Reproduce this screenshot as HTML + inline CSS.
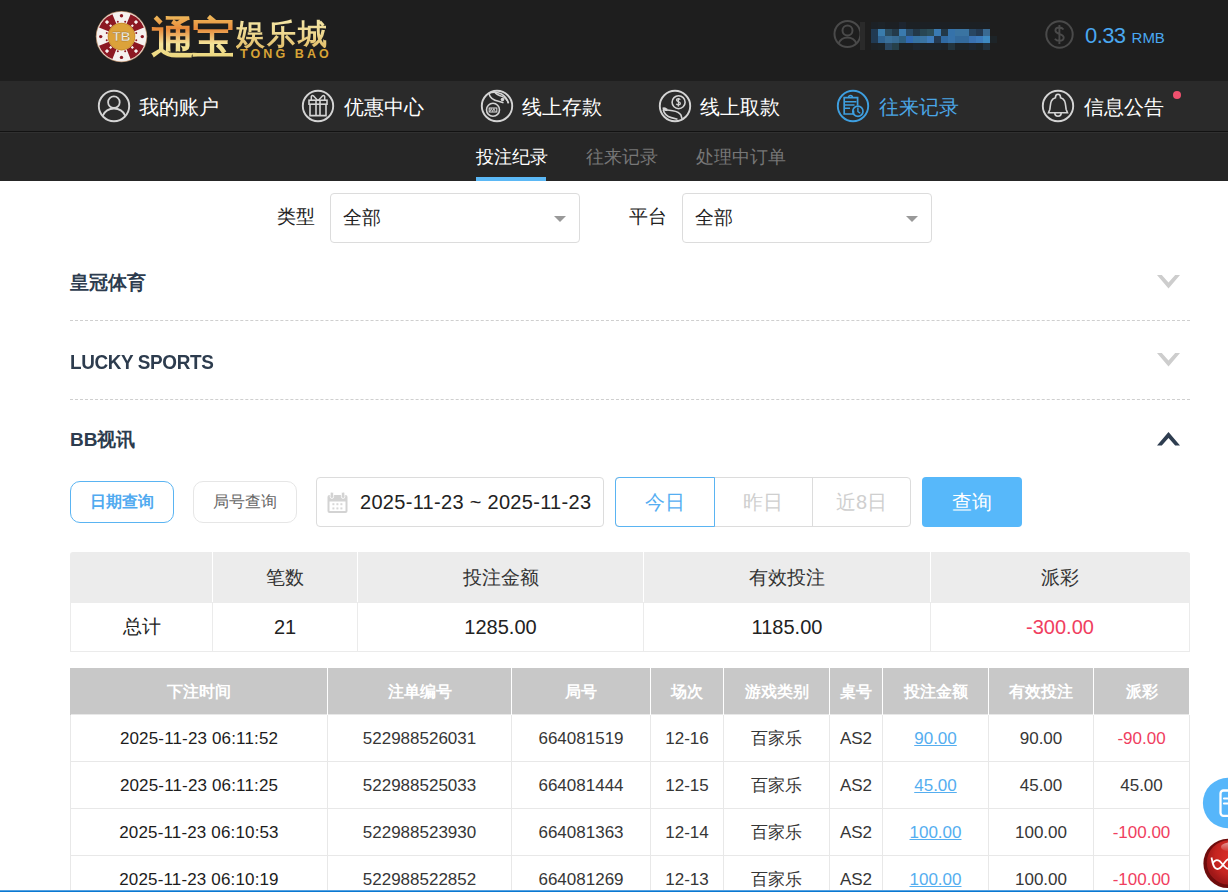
<!DOCTYPE html>
<html><head><meta charset="utf-8">
<style>
*{margin:0;padding:0;box-sizing:border-box}
html,body{width:1228px;height:892px;overflow:hidden;background:#fff;font-family:"Liberation Sans",sans-serif;color:#333}
.abs{position:absolute}
#hdr{position:absolute;left:0;top:0;width:1228px;height:81px;background:#1e1e1e}
#nav{position:absolute;left:0;top:81px;width:1228px;height:50px;background:#2a2a2a}
#navline{position:absolute;left:0;top:131px;width:1228px;height:1px;background:#121212}
#navline2{position:absolute;left:0;top:132px;width:1228px;height:1px;background:#303030}
#sub{position:absolute;left:0;top:133px;width:1228px;height:48px;background:#262626}
.ni{position:absolute;top:81px;height:50px;display:flex;align-items:center;color:#fff;font-size:20px;white-space:nowrap}
.ni svg{display:block}
.ni span{position:absolute;top:14px;line-height:24px}
.st{position:absolute;top:145px;font-size:18px;line-height:24px;color:#777;white-space:nowrap}
.lbl{position:absolute;font-size:19px;line-height:24px;color:#222}
.sel{position:absolute;top:193px;width:250px;height:50px;border:1px solid #dcdcdc;border-radius:4px;background:#fff}
.sel span{position:absolute;left:12px;top:12px;font-size:19px;line-height:24px;color:#222}
.sel i{position:absolute;right:13px;top:22px;width:0;height:0;border-left:6px solid transparent;border-right:6px solid transparent;border-top:6px solid #999}
.sec{position:absolute;left:70px;font-size:19px;font-weight:bold;color:#2d3c4e;line-height:24px;white-space:nowrap}
.dash{position:absolute;left:70px;width:1120px;height:0;border-top:1px dashed #cfcfcf}

table{border-collapse:collapse;table-layout:fixed}
.sum td{border:1px solid #ebebeb;text-align:center;font-size:19px;color:#222;padding:0}
.sum .h td{background:#ececec;height:50px;color:#333;border-color:#fff;border-top-color:#ececec;border-bottom-color:#ececec}
.sum .h td:first-child{border-left-color:#ececec}
.sum .h td:last-child{border-right-color:#ececec}
.sum .r td{height:49px;background:#fff}
.sum .r td.n{font-size:20px}
.det td{border:1px solid #e8e8e8;text-align:center;font-size:17px;color:#363636;height:47px;padding:2px 0 0;white-space:nowrap}
.det .h td{background:#c8c8c8;color:#fff;font-weight:bold;font-size:16px;border-color:#fff;border-top:0;border-bottom:0;height:46px;padding-top:3px}
.det u{color:#55aef0}
.det .h td:first-child{border-left-color:#c8c8c8}
.det .red{color:#f03e60}
.det tr:not(.h) td:first-child{color:#1c1c1c;letter-spacing:0.15px}

.gold{background:linear-gradient(180deg,#f0c060 0%,#e88a3a 30%,#f4e49a 60%,#e8d070 100%);-webkit-background-clip:text;background-clip:text;color:transparent}
.gold2{color:#d8a436}
.gold3{background:linear-gradient(180deg,#f6e8a8 0%,#eed890 50%,#e0b860 100%);-webkit-background-clip:text;background-clip:text;color:transparent}
</style></head>
<body>
<div id="hdr"></div>
<div id="nav"></div>
<div id="navline"></div>
<div id="navline2"></div>
<div id="sub"></div>


<!-- logo -->
<svg class="abs" style="left:94px;top:9px" width="56" height="56" viewBox="0 0 56 56">
 <circle cx="27.5" cy="27.6" r="25.7" fill="#b89070"/>
 <circle cx="27.5" cy="27.6" r="24.9" fill="#f5f1ef"/>
 <path d="M49.94 36.67A24.2 24.2 0 0 1 36.57 50.04L32.56 40.12A13.5 13.5 0 0 0 40.02 32.66ZM18.43 50.04A24.2 24.2 0 0 1 5.06 36.67L14.98 32.66A13.5 13.5 0 0 0 22.44 40.12ZM5.06 18.53A24.2 24.2 0 0 1 18.43 5.16L22.44 15.08A13.5 13.5 0 0 0 14.98 22.54ZM36.57 5.16A24.2 24.2 0 0 1 49.94 18.53L40.02 22.54A13.5 13.5 0 0 0 32.56 15.08Z" fill="#8c1822"/>
 <g fill="#f5f1ef"><rect x="40.50" y="40.60" width="3.00" height="3.00" transform="rotate(45 42.00 42.10)"/><rect x="37.22" y="37.32" width="2.20" height="2.20" transform="rotate(45 38.32 38.42)"/><rect x="11.50" y="40.60" width="3.00" height="3.00" transform="rotate(45 13.00 42.10)"/><rect x="15.58" y="37.32" width="2.20" height="2.20" transform="rotate(45 16.68 38.42)"/><rect x="11.50" y="11.60" width="3.00" height="3.00" transform="rotate(45 13.00 13.10)"/><rect x="15.58" y="15.68" width="2.20" height="2.20" transform="rotate(45 16.68 16.78)"/><rect x="40.50" y="11.60" width="3.00" height="3.00" transform="rotate(45 42.00 13.10)"/><rect x="37.22" y="15.68" width="2.20" height="2.20" transform="rotate(45 38.32 16.78)"/></g>
 <g fill="#8c1822"><circle cx="48.30" cy="27.60" r="1.7"/><circle cx="42.25" cy="23.92" r="1.0"/><circle cx="42.25" cy="31.28" r="1.0"/><circle cx="27.50" cy="48.40" r="1.7"/><circle cx="31.18" cy="42.35" r="1.0"/><circle cx="23.82" cy="42.35" r="1.0"/><circle cx="6.70" cy="27.60" r="1.7"/><circle cx="12.75" cy="31.28" r="1.0"/><circle cx="12.75" cy="23.92" r="1.0"/><circle cx="27.50" cy="6.80" r="1.7"/><circle cx="23.82" cy="12.85" r="1.0"/><circle cx="31.18" cy="12.85" r="1.0"/></g>
 <circle cx="27.5" cy="27.6" r="13.8" fill="#c98e2c"/>
 <circle cx="27.5" cy="27.6" r="12.9" fill="#dca23a"/>
 <text x="27.5" y="32.3" text-anchor="middle" font-family="Liberation Sans" font-weight="bold" font-size="13.5" fill="#f0efe8" stroke="#a07020" stroke-width="0.4">TB</text>
</svg>
<div class="abs gold" style="left:151px;top:14px;font-size:44px;line-height:50px;font-family:'Liberation Serif',serif;font-weight:bold;letter-spacing:-3px;white-space:nowrap">通宝</div>
<div class="abs gold3" style="left:236px;top:16.5px;font-size:29px;line-height:34px;font-family:'Liberation Serif',serif;font-weight:bold;letter-spacing:1.8px;white-space:nowrap">娱乐城</div>
<div class="abs gold2" style="left:240px;top:47.5px;font-size:12.5px;line-height:13px;font-family:'Liberation Sans',sans-serif;font-weight:bold;letter-spacing:3.1px;white-space:nowrap">TONG BAO</div>

<!-- user info -->
<svg class="abs" style="left:833px;top:19px" width="32" height="31" viewBox="0 0 32 31">
 <circle cx="14.5" cy="15" r="13" fill="none" stroke="#4a4a4a" stroke-width="2"/>
 <circle cx="14.5" cy="11.5" r="5" fill="none" stroke="#4a4a4a" stroke-width="2"/>
 <path d="M5.5 24.5c2-4.5 5-6 9-6s7 1.5 9 6" fill="none" stroke="#4a4a4a" stroke-width="2"/>
 <rect x="27" y="3" width="5" height="28" fill="#2a2a2a"/>
</svg>
<svg class="abs" style="left:871px;top:22px;filter:blur(0.5px)" width="126" height="28" viewBox="0 0 126 28" shape-rendering="crispEdges"><rect x="0" y="0" width="7" height="7" fill="#1c2126"/><rect x="7" y="0" width="7" height="7" fill="#1d2328"/><rect x="14" y="0" width="7" height="7" fill="#1c2024"/><rect x="21" y="0" width="7" height="7" fill="#1c2024"/><rect x="28" y="0" width="7" height="7" fill="#1d2530"/><rect x="35" y="0" width="7" height="7" fill="#1c2024"/><rect x="42" y="0" width="7" height="7" fill="#1c2024"/><rect x="49" y="0" width="7" height="7" fill="#1c2024"/><rect x="56" y="0" width="7" height="7" fill="#1c2024"/><rect x="63" y="0" width="7" height="7" fill="#1c2024"/><rect x="70" y="0" width="7" height="7" fill="#1c2024"/><rect x="77" y="0" width="7" height="7" fill="#1c2024"/><rect x="84" y="0" width="7" height="7" fill="#1c2024"/><rect x="91" y="0" width="7" height="7" fill="#1c2024"/><rect x="98" y="0" width="7" height="7" fill="#1c2024"/><rect x="105" y="0" width="7" height="7" fill="#1c2024"/><rect x="112" y="0" width="7" height="7" fill="#1c2024"/><rect x="0" y="7" width="7" height="7" fill="#213a52"/><rect x="7" y="7" width="7" height="7" fill="#3a7cac"/><rect x="14" y="7" width="7" height="7" fill="#2b4c60"/><rect x="21" y="7" width="7" height="7" fill="#243a4a"/><rect x="28" y="7" width="7" height="7" fill="#3a7aae"/><rect x="35" y="7" width="7" height="7" fill="#2a4c68"/><rect x="42" y="7" width="7" height="7" fill="#233848"/><rect x="49" y="7" width="7" height="7" fill="#284652"/><rect x="56" y="7" width="7" height="7" fill="#2c4e5a"/><rect x="63" y="7" width="7" height="7" fill="#3a7ab2"/><rect x="70" y="7" width="7" height="7" fill="#223848"/><rect x="77" y="7" width="7" height="7" fill="#3572aa"/><rect x="84" y="7" width="7" height="7" fill="#3a74a2"/><rect x="91" y="7" width="7" height="7" fill="#3a74a2"/><rect x="98" y="7" width="7" height="7" fill="#284662"/><rect x="105" y="7" width="7" height="7" fill="#243a52"/><rect x="112" y="7" width="7" height="7" fill="#3a6a92"/><rect x="0" y="14" width="7" height="7" fill="#213a52"/><rect x="7" y="14" width="7" height="7" fill="#306492"/><rect x="14" y="14" width="7" height="7" fill="#3a709a"/><rect x="21" y="14" width="7" height="7" fill="#376a92"/><rect x="28" y="14" width="7" height="7" fill="#2e6082"/><rect x="35" y="14" width="7" height="7" fill="#306ab2"/><rect x="42" y="14" width="7" height="7" fill="#3672a2"/><rect x="49" y="14" width="7" height="7" fill="#3a74a2"/><rect x="56" y="14" width="7" height="7" fill="#3e7cba"/><rect x="63" y="14" width="7" height="7" fill="#243a52"/><rect x="70" y="14" width="7" height="7" fill="#306aa2"/><rect x="77" y="14" width="7" height="7" fill="#3672aa"/><rect x="84" y="14" width="7" height="7" fill="#336a9c"/><rect x="91" y="14" width="7" height="7" fill="#336a9c"/><rect x="98" y="14" width="7" height="7" fill="#3a72b2"/><rect x="105" y="14" width="7" height="7" fill="#3c7aba"/><rect x="112" y="14" width="7" height="7" fill="#3e8ac2"/><rect x="119" y="14" width="7" height="7" fill="#1d2428"/><rect x="0" y="21" width="7" height="7" fill="#1d2226"/><rect x="7" y="21" width="7" height="7" fill="#1d2428"/><rect x="14" y="21" width="7" height="7" fill="#2a4862"/><rect x="21" y="21" width="7" height="7" fill="#26404a"/><rect x="28" y="21" width="7" height="7" fill="#1d2226"/><rect x="35" y="21" width="7" height="7" fill="#1d2226"/><rect x="42" y="21" width="7" height="7" fill="#1d2630"/><rect x="49" y="21" width="7" height="7" fill="#1d2428"/><rect x="56" y="21" width="7" height="7" fill="#1d242a"/><rect x="63" y="21" width="7" height="7" fill="#1d242a"/><rect x="70" y="21" width="7" height="7" fill="#1d2226"/><rect x="77" y="21" width="7" height="7" fill="#22343e"/><rect x="84" y="21" width="7" height="7" fill="#1d2428"/><rect x="91" y="21" width="7" height="7" fill="#1d2428"/><rect x="98" y="21" width="7" height="7" fill="#1d2630"/><rect x="105" y="21" width="7" height="7" fill="#1d2428"/><rect x="112" y="21" width="7" height="7" fill="#22323e"/></svg>
<svg class="abs" style="left:1044px;top:19px" width="31" height="31" viewBox="0 0 31 31">
 <circle cx="15.5" cy="15.5" r="13.2" fill="none" stroke="#4a4a4a" stroke-width="2"/>
 <path d="M19.5 10.5c-1-1.3-2.4-2-4.2-2-2.3 0-3.9 1.3-3.9 3.1 0 4.2 8.3 2.6 8.3 7 0 2-1.8 3.3-4.3 3.3-1.9 0-3.5-.8-4.5-2.2M15.4 6v19" fill="none" stroke="#4a4a4a" stroke-width="1.9"/>
</svg>
<div class="abs" style="left:1085px;top:22.5px;font-size:22px;line-height:26px;color:#4aa8f0;white-space:nowrap"><span style="letter-spacing:-0.6px">0.33</span> <span style="font-size:15px">RMB</span></div>

<!-- nav items -->
<div class="ni" style="left:97px">
 <svg width="34" height="34" viewBox="0 0 34 34" fill="none" stroke="#d4d4d4"><circle cx="17" cy="17" r="15.2" stroke-width="1.9"/><circle cx="16.9" cy="13.2" r="5.8" stroke-width="1.8"/><path d="M5.6 26.8C8 21.8 12 19.5 17 19.5S26 21.8 28.4 26.8" stroke-width="1.8"/></svg>
 <span style="left:42px">我的账户</span></div>
<div class="ni" style="left:301px">
 <svg width="34" height="34" viewBox="0 0 34 34" fill="none" stroke="#d4d4d4"><circle cx="17" cy="17" r="15.2" stroke-width="1.9"/><rect x="8" y="11.2" width="18" height="4" stroke-width="1.6"/><path d="M9 15.2V26.6H25V15.2M15 11.2V26.6M19 11.2V26.6" stroke-width="1.6"/><path d="M16.5 11.2L12.8 7.2Q11 5.8 10.3 7.6L10.3 11.2M17.5 11.2L21.2 7.2Q23 5.8 23.7 7.6L23.7 11.2" stroke-width="1.5"/></svg>
 <span style="left:43px">优惠中心</span></div>
<div class="ni" style="left:480px">
 <svg width="34" height="34" viewBox="0 0 34 34" fill="none" stroke="#d4d4d4"><circle cx="17" cy="17" r="15.2" stroke-width="1.9"/><path d="M8.6 4.6C12 2.8 17.5 3 21.5 5C25 7 27.3 10.5 28.6 14.2" stroke-width="1.5"/><path d="M14.5 3C16 5 19 6.5 22 7.3C25 8.5 27.3 11 28.3 14.3" stroke-width="1.3"/><path d="M9 4.8C10 8.8 13.5 11.5 18.5 12.2L23.5 13.8" stroke-width="1.5"/><circle cx="22.5" cy="10.5" r="1.8" fill="#d4d4d4" stroke="none"/><circle cx="13" cy="20.8" r="6.5" stroke-width="1.6"/><rect x="9.2" y="19" width="7.6" height="4" stroke-width="1.1"/><path d="M10 22.5l1.3-3 1.3 3 1.3-3 1.3 3" stroke-width="0.9"/></svg>
 <span style="left:42px">线上存款</span></div>
<div class="ni" style="left:658px">
 <svg width="34" height="34" viewBox="0 0 34 34" fill="none" stroke="#d4d4d4"><circle cx="17" cy="17" r="15.2" stroke-width="1.9"/><circle cx="20.6" cy="13.2" r="6.5" stroke-width="1.6"/><path d="M22.3 10.6c-.5-.6-1.2-.9-2-.9-1.1 0-1.8.6-1.8 1.4 0 1.8 3.8 1.2 3.8 3.2 0 .9-.8 1.6-2 1.6-.9 0-1.6-.4-2.1-1M20.4 9v8.4" stroke-width="1.3"/><path d="M9.5 21L14.6 21.7C18 22.2 21.5 23.2 23 26.2L24 29.8" stroke-width="1.6"/><path d="M5.2 20.5C6 24.5 9 27.5 13.3 28.6L19.5 30.2" stroke-width="1.6"/><path d="M4.3 18.8Q6 17.2 9 19.6L10.4 21.4Q7.5 22.6 5.2 21.2Z" fill="#d4d4d4" stroke="none"/></svg>
 <span style="left:42px">线上取款</span></div>
<div class="ni" style="left:836px;color:#4aa6e6">
 <svg width="34" height="34" viewBox="0 0 34 34" fill="none" stroke="#3e9fe0"><circle cx="17" cy="17" r="15.2" stroke-width="1.9"/><path d="M17.5 21.5V25H8.2V8.6H21.6V16.5" stroke-width="1.7"/><path d="M12.6 8.4A1.9 1.9 0 0 1 16.4 8.4" stroke-width="1.6"/><path d="M9 12.8H20.4M9 16H18.5M9 19.3H14" stroke-width="1.6"/><circle cx="21.9" cy="22.3" r="5.1" stroke-width="1.7"/><path d="M21.9 18.5V22.6L24.3 24.3" stroke-width="1.4"/></svg>
 <span style="left:43px">往来记录</span></div>
<div class="ni" style="left:1041px">
 <svg width="34" height="34" viewBox="0 0 34 34" fill="none" stroke="#d4d4d4"><circle cx="17" cy="17" r="15.2" stroke-width="1.9"/><path d="M7.5 23.8H26.5L25.2 20.5C24.6 17.5 24.8 14.5 23.6 12C22.6 10.2 21.2 9.3 19.6 8.8C19.6 6.6 18.6 5.2 17 5.2S14.4 6.6 14.4 8.8C12.8 9.3 11.4 10.2 10.4 12C9.2 14.5 9.4 17.5 8.8 20.5Z" stroke-width="1.6"/><path d="M13.8 24A3.2 3.2 0 0 0 20.2 24" stroke-width="1.6"/></svg>
 <span style="left:43px">信息公告</span></div>
<div class="abs" style="left:1173px;top:91px;width:8px;height:8px;border-radius:50%;background:#f0506e"></div>

<!-- sub tabs -->
<div class="st" style="left:476px;color:#fff">投注纪录</div>
<div class="abs" style="left:476px;top:177px;width:70px;height:4px;background:#5bb8f5"></div>
<div class="st" style="left:586px">往来记录</div>
<div class="st" style="left:696px">处理中订单</div>

<!-- filters -->
<div class="lbl" style="left:277px;top:205px">类型</div>
<div class="sel" style="left:330px"><span>全部</span><i></i></div>
<div class="lbl" style="left:629px;top:205px">平台</div>
<div class="sel" style="left:682px"><span>全部</span><i></i></div>

<div class="sec" style="top:271px">皇冠体育</div>
<div class="dash" style="top:320px"></div>
<div class="sec" style="top:350px;font-size:21px;letter-spacing:-0.4px;transform:scaleX(0.9);transform-origin:0 0">LUCKY SPORTS</div>
<div class="dash" style="top:399px"></div>
<div class="sec" style="top:428px">BB视讯</div>


<!-- chevrons -->
<svg class="abs" style="left:1157px;top:274.5px" width="23" height="14" viewBox="0 0 23 14"><path d="M0 0H4.8L11.5 7.6L18.2 0H23L11.5 13.5Z" fill="#cdcdcd"/></svg>
<svg class="abs" style="left:1157px;top:353px" width="23" height="14" viewBox="0 0 23 14"><path d="M0 0H4.8L11.5 7.6L18.2 0H23L11.5 13.5Z" fill="#cdcdcd"/></svg>
<svg class="abs" style="left:1157px;top:431.5px" width="23" height="14" viewBox="0 0 23 14"><path d="M0 13.5H4.8L11.5 5.9L18.2 13.5H23L11.5 0Z" fill="#2e3d50"/></svg>

<!-- query tabs -->
<div class="abs btn1" style="left:70px;top:481px;width:104px;height:42px;border:1px solid #5ab4f2;border-radius:10px;color:#50aaf0;font-weight:bold;font-size:16px;line-height:40px;text-align:center">日期查询</div>
<div class="abs" style="left:193px;top:481px;width:104px;height:42px;border:1px solid #e6e6e6;border-radius:10px;color:#666;font-size:16px;line-height:40px;text-align:center">局号查询</div>
<div class="abs" style="left:316px;top:477px;width:288px;height:50px;border:1px solid #dcdcdc;border-radius:4px"></div>
<svg class="abs" style="left:327px;top:492px" width="21" height="21" viewBox="0 0 21 21"><rect x="0.5" y="3" width="20" height="18" rx="2" fill="#d3d3d3"/><rect x="2.5" y="9.5" width="16" height="9.5" fill="#fff"/><rect x="3.2" y="0" width="3.4" height="6.5" rx="1.7" fill="#d3d3d3" stroke="#fff" stroke-width="0.8"/><rect x="14.4" y="0" width="3.4" height="6.5" rx="1.7" fill="#d3d3d3" stroke="#fff" stroke-width="0.8"/><g fill="#d8d8d8"><rect x="5.4" y="11.2" width="2" height="2"/><rect x="9.4" y="11.2" width="2" height="2"/><rect x="13.4" y="11.2" width="2" height="2"/><rect x="5.4" y="15.4" width="2" height="2"/><rect x="9.4" y="15.4" width="2" height="2"/><rect x="13.4" y="15.4" width="2" height="2"/></g></svg>
<div class="abs" style="left:360px;top:489px;font-size:20px;line-height:26px;color:#222;white-space:nowrap;letter-spacing:0.3px">2025-11-23 ~ 2025-11-23</div>
<div class="abs" style="left:615px;top:477px;width:296px;height:50px;border:1px solid #dcdcdc;border-radius:4px"></div>
<div class="abs" style="left:615px;top:477px;width:100px;height:50px;border:1px solid #5ab4f2;border-radius:4px 0 0 4px;color:#55aef2;font-size:20px;line-height:48px;text-align:center">今日</div>
<div class="abs" style="left:714px;top:477px;width:99px;height:50px;border-right:1px solid #dcdcdc;color:#cfcfcf;font-size:20px;line-height:50px;text-align:center">昨日</div>
<div class="abs" style="left:812px;top:477px;width:99px;height:50px;color:#cfcfcf;font-size:20px;line-height:50px;text-align:center">近8日</div>
<div class="abs" style="left:922px;top:477px;width:100px;height:50px;border-radius:4px;background:#57b8fa;color:#fff;font-size:20px;line-height:50px;text-align:center">查询</div>

<!-- summary table -->
<div class="abs" style="left:70px;top:552px;border-radius:3px 3px 0 0;overflow:hidden"><table class="sum">
<tr class="h"><td style="width:142px"></td><td style="width:145px">笔数</td><td style="width:286px">投注金额</td><td style="width:287px">有效投注</td><td style="width:259px">派彩</td></tr>
<tr class="r"><td>总计</td><td class="n">21</td><td class="n">1285.00</td><td class="n">1185.00</td><td class="n" style="color:#f03e60">-300.00</td></tr>
</table></div>

<!-- detail table -->
<table class="abs det" style="left:70px;top:668px">
<tr class="h"><td style="width:257px">下注时间</td><td style="width:184px">注单编号</td><td style="width:139px">局号</td><td style="width:73px">场次</td><td style="width:106px">游戏类别</td><td style="width:53px">桌号</td><td style="width:106px">投注金额</td><td style="width:105px">有效投注</td><td style="width:96px">派彩</td></tr>
<tr><td>2025-11-23 06:11:52</td><td>522988526031</td><td>664081519</td><td>12-16</td><td>百家乐</td><td>AS2</td><td><u>90.00</u></td><td>90.00</td><td class="red">-90.00</td></tr>
<tr><td>2025-11-23 06:11:25</td><td>522988525033</td><td>664081444</td><td>12-15</td><td>百家乐</td><td>AS2</td><td><u>45.00</u></td><td>45.00</td><td>45.00</td></tr>
<tr><td>2025-11-23 06:10:53</td><td>522988523930</td><td>664081363</td><td>12-14</td><td>百家乐</td><td>AS2</td><td><u>100.00</u></td><td>100.00</td><td class="red">-100.00</td></tr>
<tr><td>2025-11-23 06:10:19</td><td>522988522852</td><td>664081269</td><td>12-13</td><td>百家乐</td><td>AS2</td><td><u>100.00</u></td><td>100.00</td><td class="red">-100.00</td></tr>
</table>

<!-- floating -->
<svg class="abs" style="left:1200px;top:772px" width="28" height="120" viewBox="0 0 28 120">
 <circle cx="28.2" cy="31" r="25.3" fill="#56b6fa"/>
 <rect x="20.5" y="18.5" width="16" height="25.3" rx="3" fill="none" stroke="#fff" stroke-width="2.3"/>
 <path d="M24 26.5h8M24 31.5h8" stroke="#fff" stroke-width="2.2" stroke-linecap="round"/>
 <defs>
  <radialGradient id="rb" cx="0.6" cy="0.38" r="0.6">
   <stop offset="0" stop-color="#e0302a"/><stop offset="0.7" stop-color="#c42420"/><stop offset="1" stop-color="#a01818"/>
  </radialGradient>
  <linearGradient id="hl" x1="0" y1="0" x2="0" y2="1"><stop offset="0" stop-color="#fff" stop-opacity="0.55"/><stop offset="1" stop-color="#fff" stop-opacity="0"/></linearGradient>
 </defs>
 <circle cx="28" cy="91.4" r="24.6" fill="#6e0c0c"/>
 <circle cx="29" cy="90.4" r="22.2" fill="url(#rb)"/>
 <ellipse cx="33" cy="75" rx="12" ry="5" fill="url(#hl)"/>
 <path d="M11.5 85.5C12.5 91 13.5 97 17.5 97C21 97 22.5 93 25 90C27 87.5 29 86.5 31 86" fill="none" stroke="#fff" stroke-width="1.8"/>
 <path d="M13 91C14.5 88 17 87.5 19.5 89C22 91 24.5 96 28 97" fill="none" stroke="#fff" stroke-width="1.8"/>
</svg>
<div class="abs" style="left:0;top:890px;width:1228px;height:2px;background:linear-gradient(#8cc0ea,#0a78d2 60%)"></div>
</body></html>
